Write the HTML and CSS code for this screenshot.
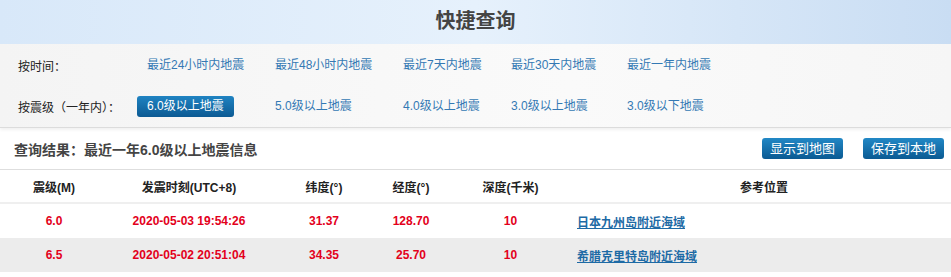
FILE: index.html
```html
<!DOCTYPE html>
<html lang="zh-CN">
<head>
    <meta charset="UTF-8">
    <meta name="viewport" content="width=device-width, initial-scale=1.0">
    <title>快捷查询</title>
    <link rel="stylesheet" href="styles.css">
</head>
<body>
    <div class="quick">
        <h2 class="quick-title">快捷查询</h2>
        <div class="filters">
            <div class="filter-row">
                <span class="filter-label">按时间：</span>
                <a href="#">最近24小时内地震</a>
                <a href="#">最近48小时内地震</a>
                <a href="#">最近7天内地震</a>
                <a href="#">最近30天内地震</a>
                <a href="#">最近一年内地震</a>
            </div>
            <div class="filter-row">
                <span class="filter-label">按震级（一年内）：</span>
                <a href="#" class="active">6.0级以上地震</a>
                <a href="#">5.0级以上地震</a>
                <a href="#">4.0级以上地震</a>
                <a href="#">3.0级以上地震</a>
                <a href="#">3.0级以下地震</a>
            </div>
        </div>
    </div>

    <div class="result-bar">
        <h3 class="result-title">查询结果：最近一年6.0级以上地震信息</h3>
        <div class="actions">
            <a href="#" class="btn">显示到地图</a>
            <a href="#" class="btn">保存到本地</a>
        </div>
    </div>

    <table class="quake-table">
        <thead>
            <tr>
                <th class="c-mag">震级(M)</th>
                <th class="c-time">发震时刻(UTC+8)</th>
                <th class="c-lat">纬度(°)</th>
                <th class="c-lon">经度(°)</th>
                <th class="c-depth">深度(千米)</th>
                <th class="c-place">参考位置</th>
            </tr>
        </thead>
        <tbody>
            <tr>
                <td>6.0</td>
                <td>2020-05-03 19:54:26</td>
                <td>31.37</td>
                <td>128.70</td>
                <td>10</td>
                <td class="place"><a href="#">日本九州岛附近海域</a></td>
            </tr>
            <tr class="alt">
                <td>6.5</td>
                <td>2020-05-02 20:51:04</td>
                <td>34.35</td>
                <td>25.70</td>
                <td>10</td>
                <td class="place"><a href="#">希腊克里特岛附近海域</a></td>
            </tr>
        </tbody>
    </table>
</body>
</html>
```

FILE: styles.css
```css
body {
    margin: 0;
    padding: 0;
    background-color: white;
    color: #333;
    font-family: "Liberation Sans", Arial, "Noto Sans CJK SC", sans-serif;
    font-size: 12px;
}
a {
    text-decoration: none;
}
.quick-title {
    margin: 0;
    height: 44px;
    line-height: 42px;
    text-align: center;
    font-size: 20px;
    font-weight: bold;
    color: #444;
    background: linear-gradient(to right, #d8e8f9, #e6f1fc 50%, #c9ddf3);
}
.filters {
    background: linear-gradient(to right, #f4f4f4, #fafafa 60%, #f6f6f6);
    border-bottom: 1px solid #dcdcdc;
    box-shadow: 0 2px 3px rgba(0, 0, 0, 0.06);
}
.filter-row {
    display: grid;
    grid-template-columns: 119px 128px 128px 108px 116px auto;
    align-items: center;
    height: 42px;
    padding-left: 18px;
}
.filter-row:last-child {
    height: 41px;
}
.filter-label {
    color: #222;
}
.filter-row a {
    justify-self: start;
    padding: 0 10px;
    line-height: 21px;
    color: #3479b4;
}
.filter-row a.active {
    color: white;
    border-radius: 3px;
    background: linear-gradient(#1f83c2, #0c5a93);
}
.result-bar {
    display: flex;
    align-items: center;
    justify-content: space-between;
    height: 41px;
    padding: 0 7px 0 14px;
    border-bottom: 1px solid #dedede;
}
.result-title {
    margin: 0;
    font-size: 14px;
    font-weight: bold;
    color: #444;
}
.actions {
    display: flex;
    gap: 20px;
}
.btn {
    display: block;
    width: 81px;
    height: 21px;
    line-height: 21px;
    text-align: center;
    font-size: 13px;
    color: white;
    border-radius: 3px;
    background: linear-gradient(#2288c6, #0b5a92);
}
.quake-table {
    width: 100%;
    border-collapse: collapse;
    table-layout: fixed;
}
.quake-table th {
    height: 32px;
    padding: 0;
    font-size: 12px;
    font-weight: bold;
    color: #222;
    text-align: center;
    border-bottom: 2px solid #efefef;
}
.c-mag { width: 108px; }
.c-time { width: 162px; }
.c-lat { width: 108px; }
.c-lon { width: 66px; }
.c-depth { width: 133px; }
.quake-table td {
    height: 34px;
    padding: 0;
    text-align: center;
    font-weight: bold;
    color: #e3001b;
}
.quake-table tr.alt td {
    background-color: #ececec;
}
.quake-table td.place {
    text-align: left;
}
.place a {
    color: #1d6aa5;
    text-decoration: underline;
}
```
